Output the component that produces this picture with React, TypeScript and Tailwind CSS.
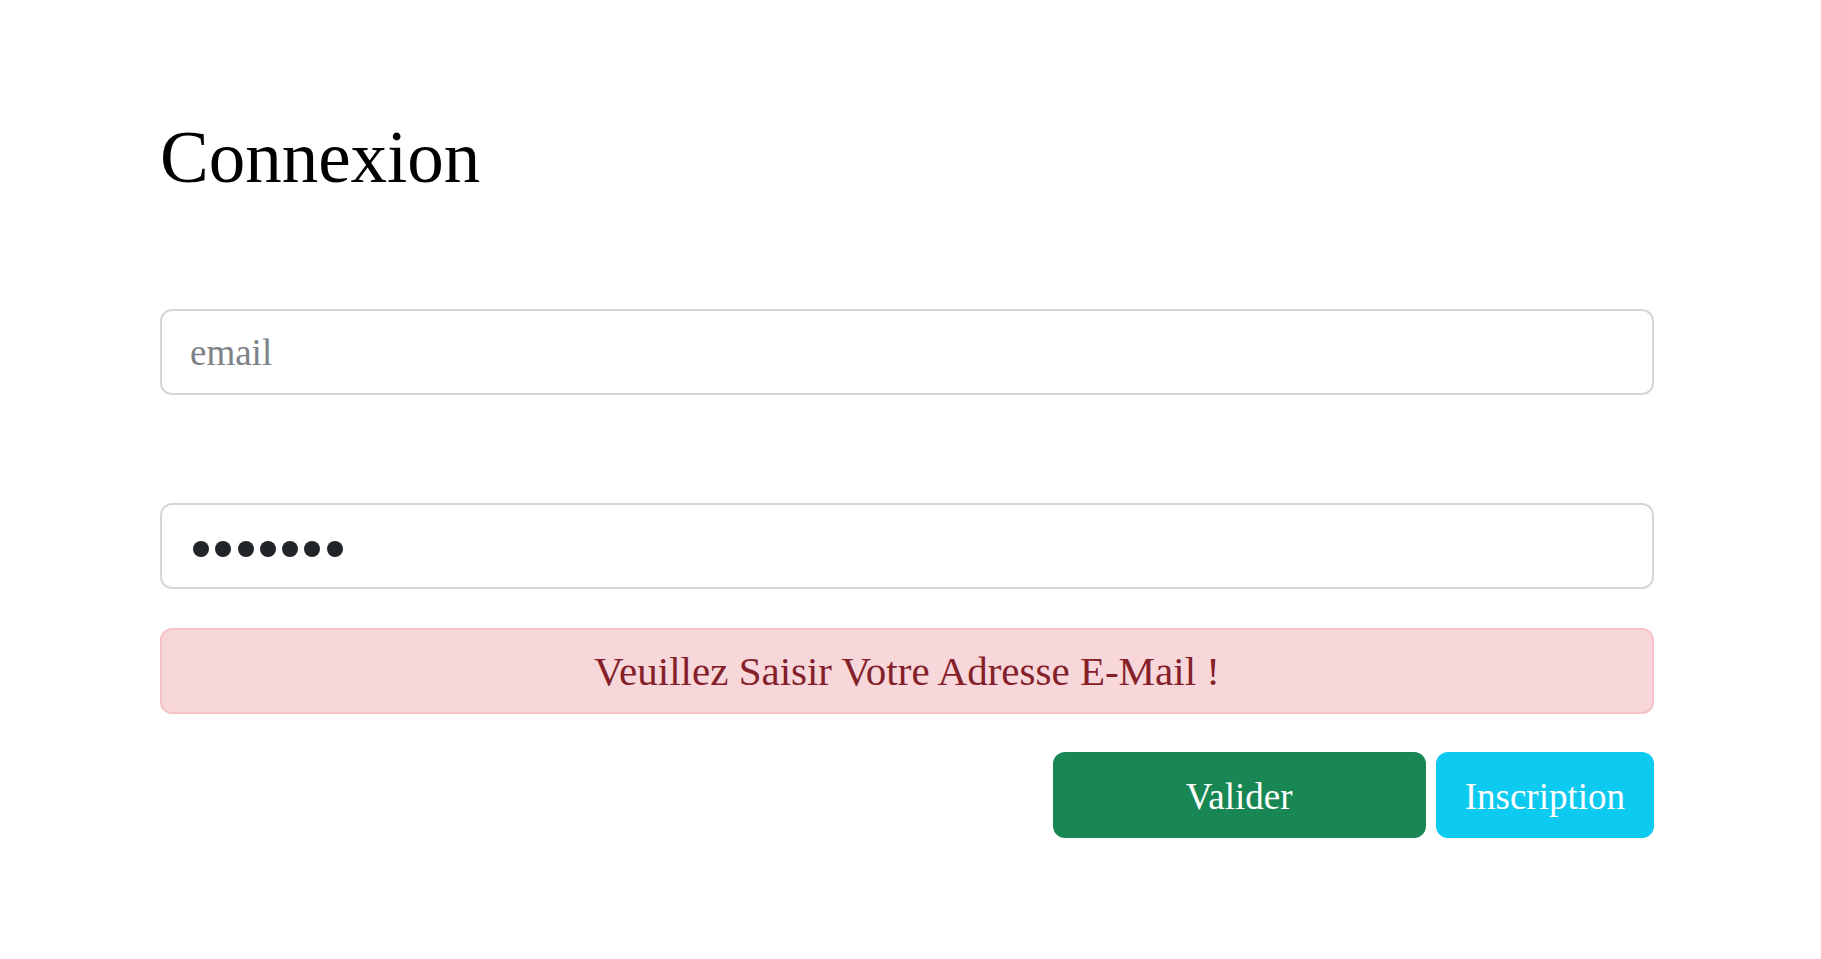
import { useState } from "react";

export default function App() {
  const [email, setEmail] = useState("");
  const dots = [0, 1, 2, 3, 4, 5, 6];

  return (
    <div className="min-h-screen w-full bg-white font-['Liberation_Serif',serif]">
      <div className="ml-[160px] w-[1494px] pt-[121px]">
        {/* Title */}
        <h1 className="text-[73px] leading-none text-black">Connexion</h1>

        {/* Email */}
        <input
          type="email"
          value={email}
          onChange={(e) => setEmail(e.target.value)}
          placeholder="email"
          className="mt-[115px] block h-[86px] w-full rounded-[12px] border-2 border-[#d3d7dc] bg-white pl-[28px] text-[37px] text-[#212529] outline-none placeholder:text-[#7d8287]"
        />

        {/* Password (masked) */}
        <div className="mt-[108px] flex h-[86px] w-full items-center rounded-[12px] border-2 border-[#d3d7dc] bg-white pl-[31px]">
          <div className="mt-[5px] flex gap-[6.3px]">
            {dots.map((d) => (
              <span key={d} className="block h-4 w-4 rounded-full bg-[#212529]" />
            ))}
          </div>
        </div>

        {/* Error */}
        <div className="mt-[39px] flex h-[86px] w-full items-center justify-center rounded-[12px] border-2 border-[#f5c2c7] bg-[#f8d7da] pt-[2px] text-[41px] text-[#842029]">
          Veuillez Saisir Votre Adresse E-Mail !
        </div>

        {/* Actions */}
        <div className="mt-[38px] flex justify-end gap-[10px]">
          <button className="h-[86px] w-[373px] rounded-[12px] bg-[#198754] pt-[4px] text-[37px] text-white">
            Valider
          </button>
          <button className="h-[86px] rounded-[12px] bg-[#0dcaf0] px-[29px] pt-[4px] text-[37px] text-white">
            Inscription
          </button>
        </div>
      </div>
    </div>
  );
}
